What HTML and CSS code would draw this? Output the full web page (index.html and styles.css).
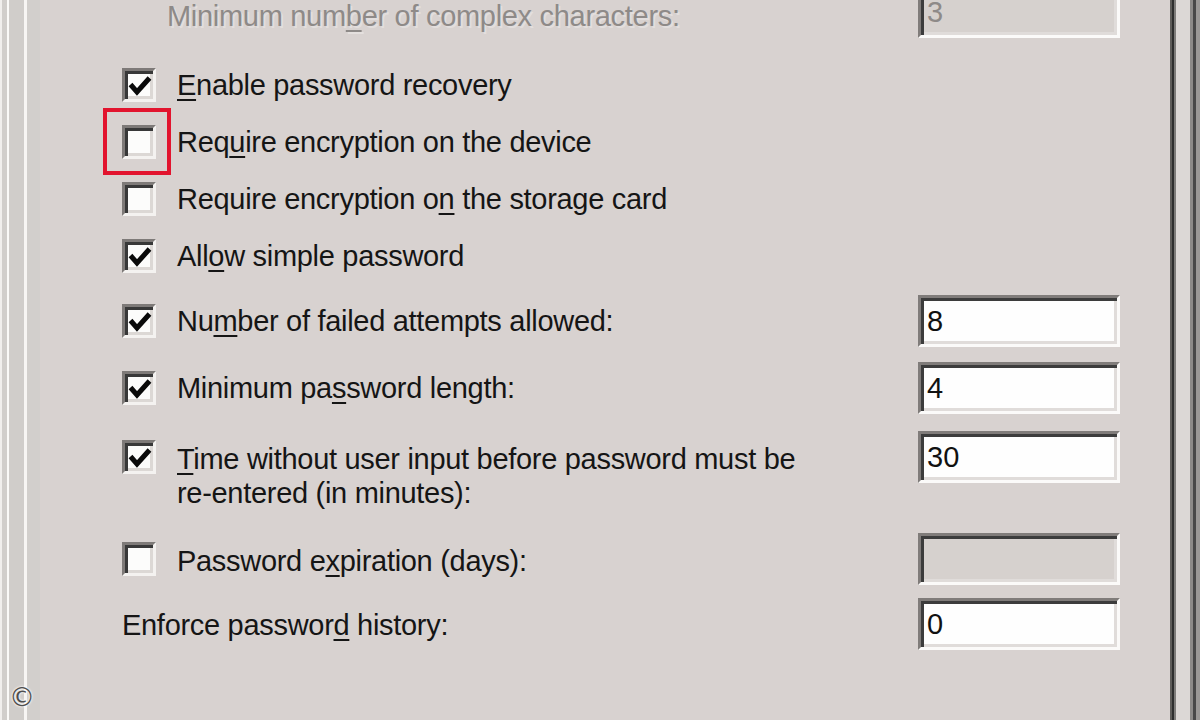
FILE: index.html
```html
<!DOCTYPE html>
<html lang="en">
<head>
<meta charset="utf-8">
<title>Password settings</title>
<link rel="stylesheet" href="styles.css">
</head>
<body>
<div class="window">
  <div class="edge-left"></div>
  <main class="panel">
    <div class="row row-a">
      <span class="label disabled">Minimum num<u>b</u>er of complex characters:</span>
      <input class="field" type="text" value="3" disabled>
    </div>

    <div class="row check-row first">
      <span class="box checked"><svg viewBox="0 0 34 34" width="34" height="34"><polyline points="8.5,16.5 15,24 27.5,10" /></svg></span>
      <span class="label"><u>E</u>nable password recovery</span>
    </div>
    <div class="row check-row">
      <span class="box"><span class="highlight"></span></span>
      <span class="label">Req<u>u</u>ire encryption on the device</span>
    </div>
    <div class="row check-row">
      <span class="box"></span>
      <span class="label">Require encryption o<u>n</u> the storage card</span>
    </div>
    <div class="row check-row">
      <span class="box checked"><svg viewBox="0 0 34 34" width="34" height="34"><polyline points="8.5,16.5 15,24 27.5,10" /></svg></span>
      <span class="label">All<u>o</u>w simple password</span>
    </div>

    <div class="row field-row r5">
      <span class="box checked"><svg viewBox="0 0 34 34" width="34" height="34"><polyline points="8.5,16.5 15,24 27.5,10" /></svg></span>
      <span class="label">Nu<u>m</u>ber of failed attempts allowed:</span>
      <input class="field" type="text" value="8">
    </div>
    <div class="row field-row r6">
      <span class="box checked"><svg viewBox="0 0 34 34" width="34" height="34"><polyline points="8.5,16.5 15,24 27.5,10" /></svg></span>
      <span class="label">Minimum pa<u>s</u>sword length:</span>
      <input class="field" type="text" value="4">
    </div>
    <div class="row field-row r7">
      <span class="box checked"><svg viewBox="0 0 34 34" width="34" height="34"><polyline points="8.5,16.5 15,24 27.5,10" /></svg></span>
      <span class="label"><u>T</u>ime without user input before password must be<br>re-entered (in minutes):</span>
      <input class="field" type="text" value="30">
    </div>
    <div class="row field-row r8">
      <span class="box"></span>
      <span class="label">Password e<u>x</u>piration (days):</span>
      <input class="field" type="text" value="" disabled>
    </div>
    <div class="row field-row r9 plain">
      <span class="label">Enforce passwor<u>d</u> history:</span>
      <input class="field" type="text" value="0">
    </div>
  </main>
  <div class="edge-right"></div>
  <span class="copyright">©</span>
</div>
</body>
</html>
```

FILE: styles.css
```css
html, body {
  margin: 0;
  padding: 0;
}

body {
  width: 1200px;
  height: 720px;
  overflow: hidden;
  background: #d8d2d0;
  font-family: "Liberation Sans", Arial, sans-serif;
  color: #151515;
}

.window {
  position: relative;
  display: flex;
  width: 1200px;
  height: 720px;
  overflow: hidden;
  background: #d8d2d0;
}

.edge-left {
  flex: 0 0 40px;
  background: linear-gradient(to right,
    #f1efed 0 2px,
    #d1cecb 2px 7px,
    #fbfaf8 7px 9px,
    #d0cdca 9px 24px,
    #f7f5f3 24px 27px,
    #d2cfcc 27px 40px);
}

.edge-right {
  flex: 0 0 30px;
  background: linear-gradient(to right,
    #5e5c5a 0 2px,
    #2f2f2f 2px 4px,
    #7e7c7a 4px 6px,
    #dcd8d6 6px 20px,
    #8c8a88 20px 23px,
    #484848 23px 26px,
    #9a9896 26px 30px);
}

.panel {
  flex: 1 1 auto;
  display: flex;
  flex-direction: column;
}

.row {
  display: flex;
  align-items: center;
  padding-left: 82px;
  padding-right: 50px;
  font-size: 29px;
  line-height: 34px;
  letter-spacing: -0.3px;
}

.label {
  flex: 1 1 auto;
  white-space: nowrap;
}

.label u {
  text-decoration-thickness: 2px;
  text-underline-offset: 4px;
}

.box + .label {
  margin-left: 21px;
}

/* disabled first row */
.row-a {
  margin-top: -14px;
  height: 52px;
  padding-left: 127px;
}

.row-a .label {
  margin-top: 7px;
}

.disabled {
  color: #8e8a88;
  text-shadow: 2px 2px 0 rgba(255, 255, 255, 0.3);
}

/* checkbox rows */
.check-row {
  height: 57px;
}

.check-row.first {
  margin-top: 18px;
}

.box {
  position: relative;
  flex: 0 0 auto;
  box-sizing: border-box;
  width: 34px;
  height: 34px;
  background: #fcfcfb;
  border: 3px solid;
  border-color: #7e7a78 #f4f2f0 #f4f2f0 #7e7a78;
  box-shadow: inset 3px 3px 0 #383838, inset -3px -3px 0 #dcd8d5;
}

.box svg {
  position: absolute;
  left: -3px;
  top: -3px;
}

.box polyline {
  fill: none;
  stroke: #0a0a0a;
  stroke-width: 5;
  stroke-linejoin: miter;
  stroke-linecap: butt;
}

.highlight {
  position: absolute;
  left: -22px;
  top: -20px;
  width: 68px;
  height: 67px;
  box-sizing: border-box;
  border: 4px solid #e2142e;
}

/* rows with edit fields */
.field-row {
  height: 52px;
}

.r5 { margin-top: 11px; }
.r6 { margin-top: 15px; }

.r7 {
  margin-top: 17px;
  height: 79px;
  align-items: flex-start;
}

.r7 .box { margin-top: 9px; }
.r7 .label { margin-top: 11px; }

.r8 { margin-top: 23px; }
.r8 .label { margin-top: 4px; }

.r9 { margin-top: 13px; }
.r9 .label { margin-top: 2px; }

.field {
  flex: 0 0 202px;
  box-sizing: border-box;
  width: 202px;
  height: 52px;
  margin: 0;
  padding: 0 0 0 6px;
  font: inherit;
  font-size: 29px;
  letter-spacing: 0;
  color: #111;
  background: #fefefe;
  border: 3px solid;
  border-color: #807c7a #fbfaf9 #fbfaf9 #807c7a;
  box-shadow: inset 3px 3px 0 #3c3c3c, inset -3px -3px 0 #e0dcda;
  outline: none;
}

.field:disabled {
  background: #d6d1ce;
  color: #8e8a88;
  opacity: 1;
  -webkit-text-fill-color: #8e8a88;
}

.copyright {
  position: absolute;
  left: 9px;
  top: 682px;
  font-family: "DejaVu Sans", sans-serif;
  font-size: 26px;
  line-height: 30px;
  color: #4e4e4e;
  text-shadow: 0 0 2px #fff, 0 0 3px #fff;
}
```
